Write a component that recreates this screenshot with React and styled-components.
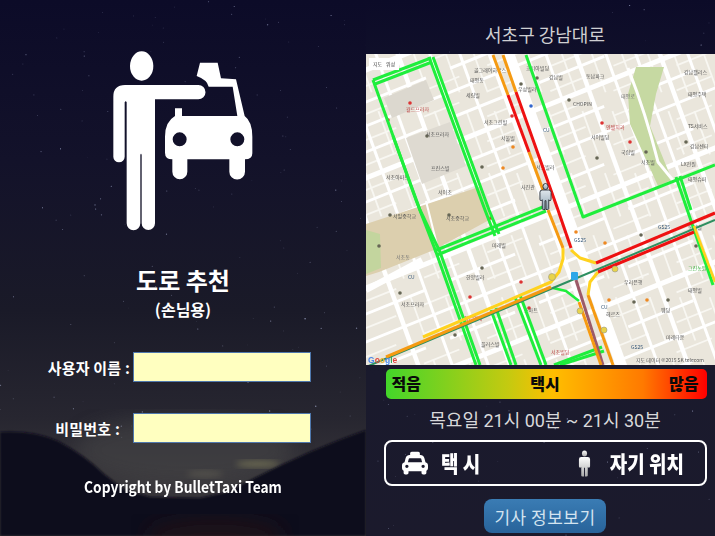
import React from "react";
import styled, { createGlobalStyle } from "styled-components";
import { FaTaxi } from "react-icons/fa";

const KR = `"Noto Sans CJK KR", "Noto Sans", sans-serif`;

// star positions come from a small seeded generator so the sky stays the same
const makeStars = (count, width, height, seed) => {
  let s = seed;
  const next = () => {
    s = (s * 16807) % 2147483647;
    return s / 2147483647;
  };
  return Array.from({ length: count }, () => ({
    x: next() * width,
    y: next() * height,
    r: 0.25 + next() * 0.45,
    o: 0.15 + next() * 0.55,
  }));
};

const Stars = ({ width, height, count, seed }) => (
  <StarSky viewBox={`0 0 ${width} ${height}`} $height={height}>
    {makeStars(count, width, height, seed).map((st, i) => (
      <circle key={i} cx={st.x} cy={st.y} r={st.r} fill="#cfd8ff" opacity={st.o} />
    ))}
  </StarSky>
);

const Hills = () => (
  <HillSvg viewBox="0 0 366 536">
    <defs>
      <filter id="soft"><feGaussianBlur stdDeviation="10" /></filter>
      <filter id="cloud"><feGaussianBlur stdDeviation="3" /></filter>
      <filter id="edge"><feGaussianBlur stdDeviation="0.8" /></filter>
    </defs>
    <ellipse cx="185" cy="450" rx="110" ry="34" fill="#4a4948" opacity="0.5" filter="url(#soft)" />
    <ellipse cx="258" cy="464" rx="22" ry="3.5" fill="#8f8c60" opacity="0.55" filter="url(#cloud)" />
    <ellipse cx="205" cy="474" rx="18" ry="4" fill="#6f6c5c" opacity="0.4" filter="url(#cloud)" />
    <g filter="url(#edge)">
      <path d="M0 432 Q34 430 58 441 Q86 456 104 474 L125 490 L150 497 L200 498 L228 492 Q300 453 366 430 V536 H0 Z" fill="#0f0b1c" />
    </g>
    <ellipse cx="215" cy="536" rx="70" ry="18" fill="#2b1518" opacity="0.55" filter="url(#soft)" />
  </HillSvg>
);

const PassengerLogo = () => (
  <LogoSvg viewBox="0 0 540 600">
    <ellipse cx="155" cy="78" rx="35" ry="44" fill="#fff" />
    <path
      fill="#fff"
      d="M105 135 H325 A21.5 21.5 0 0 1 325 178 H195 V550 A20 20 0 0 1 155 550 V345 Q153 337 151 345 V550 A20 20 0 0 1 110 550 V187 Q107 180 104 187 V350 A17 17 0 0 1 70 350 V170 Q70 135 105 135 Z"
    />
    <path
      fill="#fff"
      fillRule="evenodd"
      d="M330 68 H383 L393 115 L438 118 L464 228 Q487 245 487 290 V340 Q487 358 465 358 V395 A23 23 0 0 1 418 395 V358 H292 V395 A22.5 22.5 0 0 1 247 395 V358 Q225 358 225 338 V290 Q225 245 255 228 V205 H276 V228 H442 L428 140 H356 Q352 120 320 108 Z M290 298 A21 21 0 1 0 248 298 A21 21 0 1 0 290 298 Z M463 298 A21 21 0 1 0 421 298 A21 21 0 1 0 463 298 Z"
    />
  </LogoSvg>
);

const PersonFigure = ({ id, x = 0, y = 0, width = 14, height = 28, from = "#fff", to = "#aaa", edge = "none" }) => (
  <svg x={x} y={y} width={width} height={height} viewBox="0 0 28 56">
    <defs>
      <linearGradient id={id} x1="0" y1="0" x2="0" y2="1">
        <stop offset="0" stopColor={from} />
        <stop offset="1" stopColor={to} />
      </linearGradient>
    </defs>
    <ellipse cx="14" cy="6.5" rx="5.5" ry="6.5" fill={`url(#${id})`} stroke={edge} strokeWidth="2" />
    <path
      fill={`url(#${id})`}
      stroke={edge}
      strokeWidth="2"
      d="M7 14 H21 Q26 14 26 19 V34 Q26 37 23.5 37 Q22 37 21 35 V54 Q21 56 18 56 H15 V37 H13 V56 H10 Q7 56 7 54 V35 Q6 37 4.5 37 Q2 37 2 34 V19 Q2 14 7 14 Z"
    />
  </svg>
);

const avenues = [-62, -28, 8, 30, 62, 92, 122, 141, 178, 208, 238, 268, 292, 320, 350];
const alleys = [-45, -10, 46, 78, 106, 160, 194, 224, 254, 280, 306, 336];
const streets = [18, 50, 74, 100, 126, 150, 176, 208, 236, 262, 290, 320, 350, 380, 410, 440, 470];
const lanes = [34, 62, 88, 113, 138, 163, 192, 222, 249, 276, 305, 335, 365, 395, 425, 455];

const schools = [
  { d: "M0 170 L113 133 L125 165 L68 196 L13 218 L0 222 Z", fill: "#dccfae" },
  { d: "M0 176 L14 180 L15 214 L0 220 Z", fill: "#c3d59e" },
  { d: "M270 13 L298 13 L290 40 L284 72 L306 126 L292 132 L264 70 L262 40 Z", fill: "#c6d9a2" },
  { d: "M18 44 L60 26 L68 46 L26 64 Z", fill: "#dcd8cf" },
  { d: "M40 84 L84 68 L100 112 L56 130 Z", fill: "#dedad1" },
];

const traffic = [
  { c: "#1fee3c", w: 3, p: "7,26 65,4" },
  { c: "#1fee3c", w: 3, p: "9,30 66,8" },
  { c: "#1fee3c", w: 3, p: "63,3 119,156 129,182" },
  { c: "#1fee3c", w: 3, p: "67,3 123,156 133,180" },
  { c: "#1fee3c", w: 3, p: "7,26 50,146 70,198 110,311" },
  { c: "#1fee3c", w: 3, p: "27,82 54,156 74,198 114,311" },
  { c: "#1fee3c", w: 3, p: "68,197 177,153" },
  { c: "#1fee3c", w: 3, p: "71,201 180,157" },
  { c: "#1fee3c", w: 3, p: "125,256 145,311" },
  { c: "#1fee3c", w: 3, p: "130,254 150,311" },
  { c: "#1fee3c", w: 3, p: "149,243 175,311" },
  { c: "#1fee3c", w: 3, p: "154,241 180,311" },
  { c: "#1fee3c", w: 3, p: "188,311 236,293" },
  { c: "#1fee3c", w: 3, p: "194,311 238,297" },
  { c: "#1fee3c", w: 3, p: "160,1 217,163 349,111" },
  { c: "#1fee3c", w: 3, p: "310,123 347,231" },
  { c: "#1fee3c", w: 3, p: "314,122 325,156" },
  { c: "#1fee3c", w: 2.6, p: "187,234 200,237 213,247" },
  { c: "#2e8f60", w: 2, p: "0,313 187,234 349,166" },
  { c: "#9c5a68", w: 3, p: "210,226 237,311" },
  { c: "#f59a12", w: 3, p: "127,1 142,41" },
  { c: "#f59a12", w: 3, p: "137,1 150,38" },
  { c: "#f59a12", w: 3, p: "163,98 177,136" },
  { c: "#f59a12", w: 3, p: "182,156 197,194" },
  { c: "#f59a12", w: 3, p: "20,303 185,233" },
  { c: "#f59a12", w: 3, p: "222,241 247,311" },
  { c: "#f59a12", w: 3, p: "213,248 235,311" },
  { c: "#ffd21e", w: 3, p: "57,283 185,228 193,218 197,205 197,194" },
  { c: "#ffd21e", w: 3, p: "205,196 214,204 230,209" },
  { c: "#ffd21e", w: 3, p: "232,218 224,228 222,241" },
  { c: "#ffd21e", w: 2.6, p: "328,172 349,228" },
  { c: "#ee1111", w: 3, p: "142,41 163,98" },
  { c: "#ee1111", w: 3, p: "150,38 192,156 205,194" },
  { c: "#ee1111", w: 3, p: "230,209 349,159" },
  { c: "#ee1111", w: 3, p: "232,218 328,178" },
];

const places = [
  [108, 18, "골그래이하우스", "#555"], [104, 28, "태평동", "#555"], [100, 43, "세림빌", "#555"],
  [118, 70, "서초그린빌", "#555"], [160, 16, "코리아빌딩", "#555"], [152, 37, "우성빌라", "#555"],
  [183, 25, "강남빌", "#555"], [220, 24, "동남파크", "#555"], [207, 52, "CHOPIN", "#555"],
  [255, 44, "태평로", "#777"], [240, 75, "엔젤치과", "#b44"], [225, 85, "서이빌딩", "#555"],
  [255, 100, "국립빌", "#555"], [275, 110, "서초빌", "#555"], [318, 20, "강남팰리스", "#555"],
  [322, 42, "태평주택", "#555"], [322, 74, "TS서비스", "#555"], [324, 94, "강남센터", "#555"],
  [315, 112, "LX전원", "#555"], [322, 127, "태평슈퍼", "#555"], [60, 82, "서초프라자", "#555"],
  [20, 125, "서초아파트", "#555"], [65, 116, "프린스빌", "#555"], [72, 140, "서이초", "#555"],
  [40, 57, "월드프라자", "#b44"], [27, 164, "서일중학교", "#555"], [80, 166, "서초중학교", "#555"],
  [135, 86, "서울빌", "#555"], [170, 115, "서초빌라", "#555"], [155, 135, "사진관", "#555"],
  [126, 193, "미래빌", "#555"], [100, 225, "한양빌라", "#555"], [30, 205, "서초동", "#777"],
  [35, 252, "서초프라자", "#555"], [98, 266, "청담연세", "#b44"], [158, 258, "스마트", "#555"],
  [115, 292, "플러스빌", "#555"], [185, 300, "서초빌딩", "#b44"], [240, 262, "헤르츠", "#555"],
  [258, 230, "우리은행", "#555"], [295, 258, "웨딩", "#555"], [322, 238, "태평빌", "#555"],
  [300, 285, "미래타운", "#555"], [322, 175, "동서빌", "#555"], [322, 216, "그린농원", "#3a3"],
  [208, 188, "GS25", "#357"], [292, 175, "GS25", "#357"], [265, 295, "GS25", "#357"],
  [42, 225, "CU", "#357"], [235, 255, "CU", "#357"], [177, 78, "CU", "#357"],
];

const pois = [
  [44, 49, "#d33"], [22, 66, "#d33"], [61, 82, "#665"], [171, 24, "#665"], [155, 30, "#665"],
  [236, 69, "#d33"], [203, 46, "#665"], [264, 88, "#d33"], [231, 104, "#665"], [280, 98, "#665"],
  [165, 52, "#36c"], [146, 62, "#d33"], [147, 93, "#e82"], [116, 113, "#665"], [137, 114, "#e82"],
  [125, 164, "#d33"], [24, 161, "#665"], [83, 161, "#665"], [13, 192, "#665"], [116, 214, "#665"],
  [34, 239, "#665"], [104, 243, "#d33"], [89, 281, "#665"], [163, 254, "#d33"], [243, 246, "#e82"],
  [268, 248, "#665"], [302, 246, "#665"], [281, 246, "#e82"], [330, 192, "#665"], [275, 181, "#665"],
  [210, 178, "#e82"], [239, 189, "#e82"], [155, 228, "#d33"], [320, 88, "#665"],
];

const CityMap = () => (
  <MapSvg viewBox="0 0 349 311">
    <rect width="349" height="311" fill="#eae6dc" />
    {alleys.map((x) => (
      <line key={x} x1={x} y1="-5" x2={x + 116} y2="316" stroke="#f8f7f2" strokeWidth="1.8" strokeDasharray="46 20" />
    ))}
    {lanes.map((y) => (
      <line key={y} x1="-5" y1={y} x2="354" y2={y - 144} stroke="#f8f7f2" strokeWidth="1.8" strokeDasharray="38 30" />
    ))}
    {avenues.map((x, i) => (
      <line key={x} x1={x} y1="-5" x2={x + 116} y2="316" stroke="#fff" strokeWidth={x === 141 ? 11 : i % 3 === 0 ? 4.5 : 3} />
    ))}
    {streets.map((y, i) => (
      <line key={y} x1="-5" y1={y} x2="354" y2={y - 144} stroke="#fff" strokeWidth={i % 4 === 0 ? 5 : 3} strokeDasharray={i % 2 ? "70 26" : "none"} />
    ))}
    {schools.map((b, i) => (
      <path key={i} d={b.d} fill={b.fill} />
    ))}
    <line x1="60" y1="147" x2="72" y2="195" stroke="#fff" strokeWidth="2" />
    <path d="M262 14 Q280 60 292 108 L310 130" fill="none" stroke="#fff" strokeWidth="3" />
    <path d="M0 236 L56 206" fill="none" stroke="#fff" strokeWidth="6" />
    {pois.map(([x, y, c], i) => (
      <circle key={i} cx={x} cy={y} r="1.8" fill={c} />
    ))}
    {places.map(([x, y, name, c], i) => (
      <PlaceName key={i} x={x} y={y} fill={c}>{name}</PlaceName>
    ))}
    {traffic.map((t, i) => (
      <polyline key={i} points={t.p} fill="none" stroke={t.c} strokeWidth={t.w} strokeLinejoin="round" />
    ))}
    <circle cx="186" cy="223" r="3.5" fill="#e8d34a" stroke="#998" strokeWidth=".6" />
    <circle cx="249" cy="215" r="3" fill="#e8d34a" stroke="#998" strokeWidth=".6" />
    <circle cx="214" cy="257" r="3" fill="#e8d34a" stroke="#998" strokeWidth=".6" />
    <circle cx="238" cy="276" r="3" fill="#e8d34a" stroke="#998" strokeWidth=".6" />
    <rect x="205" y="218" width="7" height="8" rx="1" fill="#2ea7e8" />
    <rect x="3" y="4" width="30" height="12" fill="#fff" />
    <PlaceName x="7" y="12" fill="#444">지도</PlaceName>
    <PlaceName x="20" y="12" fill="#444">위성</PlaceName>
    <PersonFigure id="pin" x="173" y="129" width="13" height="27" from="#dfe7ec" to="#8ea3b2" edge="#2b3138" />
    <GoogleMark x="2" y="309">
      <tspan fill="#4a87e8">G</tspan><tspan fill="#e0483e">o</tspan><tspan fill="#f2b632">o</tspan>
      <tspan fill="#4a87e8">g</tspan><tspan fill="#3aa757">l</tspan><tspan fill="#e0483e">e</tspan>
    </GoogleMark>
    <PlaceName x="270" y="308" fill="#555">지도 데이터 ©2015 SK telecom</PlaceName>
  </MapSvg>
);

export default function App() {
  return (
    <Screen>
      <GlobalStyle />
      <LoginPanel>
        <Hills />
        <Stars width={366} height={440} count={150} seed={4711} />
        <LoginContent>
          <PassengerLogo />
          <Heading>도로 추천</Heading>
          <SubHeading>(손님용)</SubHeading>
          <LoginForm>
            <FieldLabel $right={0}>사용자 이름 :</FieldLabel>
            <FieldInput type="text" aria-label="사용자 이름" />
            <FieldLabel $right={10}>비밀번호 :</FieldLabel>
            <FieldInput type="password" aria-label="비밀번호" />
          </LoginForm>
          <Copyright>Copyright by BulletTaxi Team</Copyright>
        </LoginContent>
      </LoginPanel>
      <MapPanel>
        <Stars width={349} height={536} count={110} seed={90210} />
        <MapContent>
          <RoadTitle>서초구 강남대로</RoadTitle>
          <CityMap />
          <Controls>
            <DensityBar>
              <span>적음</span>
              <span>택시</span>
              <span>많음</span>
            </DensityBar>
            <TimeRange>목요일 21시 00분 ~ 21시 30분</TimeRange>
            <Legend>
              <LegendItem>
                <FaTaxi size={26} color="#fff" />
                <LegendText>택 시</LegendText>
              </LegendItem>
              <LegendItem $gap={19}>
                <svg width="13" height="27">
                  <PersonFigure id="legendPerson" width={13} height={27} />
                </svg>
                <LegendText>자기 위치</LegendText>
              </LegendItem>
            </Legend>
            <DriverButton>기사 정보보기</DriverButton>
          </Controls>
        </MapContent>
      </MapPanel>
    </Screen>
  );
}

const GlobalStyle = createGlobalStyle`
  html, body {
    margin: 0;
    padding: 0;
    background: #12121f;
  }
  body {
    font-family: ${KR};
  }
`;

const Screen = styled.div`
  display: flex;
  width: 715px;
  height: 536px;
  overflow: hidden;
`;

const LoginPanel = styled.section`
  position: relative;
  width: 366px;
  height: 536px;
  background: linear-gradient(180deg, #0c0b28 0%, #13122a 30%, #1a1a28 58%, #272630 78%, #37353a 90%);
`;

const MapPanel = styled.section`
  position: relative;
  width: 349px;
  height: 536px;
  background: linear-gradient(180deg, #0c0b28 0%, #10102a 12%, #1a1a2d 70%, #1b1a2c 100%);
`;

const StarSky = styled.svg`
  position: absolute;
  inset: 0;
  width: 100%;
  height: ${({ $height }) => $height}px;
`;

const HillSvg = styled.svg`
  position: absolute;
  inset: 0;
  width: 100%;
  height: 100%;
`;

const LoginContent = styled.div`
  position: relative;
  display: flex;
  flex-direction: column;
  align-items: center;
  height: 100%;
  padding-top: 40px;
  box-sizing: border-box;
  color: #fff;
`;

const LogoSvg = styled.svg`
  display: block;
  width: 180px;
  height: 200px;
  margin-right: 7px;
`;

const Heading = styled.h1`
  margin: 26px 0 0;
  font-size: 24px;
  line-height: 28px;
  font-weight: 700;
`;

const SubHeading = styled.h2`
  margin: 3px 0 0;
  font-size: 16px;
  line-height: 24px;
  font-weight: 700;
`;

const LoginForm = styled.form`
  display: grid;
  grid-template-columns: 133px 178px;
  grid-auto-rows: 30px;
  row-gap: 31px;
  align-items: center;
  width: 311px;
  margin: 31px 0 0 -55px;
`;

const FieldLabel = styled.label`
  justify-self: end;
  margin-right: ${({ $right }) => $right + 3}px;
  font-size: 15px;
  font-weight: 700;
  letter-spacing: 0.2px;
  white-space: nowrap;
`;

const FieldInput = styled.input`
  box-sizing: border-box;
  width: 178px;
  height: 30px;
  padding: 0 4px;
  border: 1px solid #4f78ad;
  border-radius: 0;
  background: #ffffc0;
  outline: none;
`;

const Copyright = styled.p`
  margin: 32px 0 0;
  font-size: 16px;
  line-height: 22px;
  font-weight: 700;
  white-space: nowrap;
  transform: scaleX(0.86);
`;

const MapContent = styled.div`
  position: relative;
  display: flex;
  flex-direction: column;
  align-items: center;
  height: 100%;
`;

const RoadTitle = styled.h2`
  flex: none;
  margin: 0 0 0 9px;
  height: 54px;
  line-height: 68px;
  font-size: 18px;
  font-weight: 400;
  color: #cfcfd2;
`;

const MapSvg = styled.svg`
  display: block;
  flex: none;
  width: 349px;
  height: 311px;
  filter: blur(0.55px);
`;

const PlaceName = styled.text`
  font-family: ${KR};
  font-size: 5px;
`;

const GoogleMark = styled.text`
  font-family: "Liberation Sans", sans-serif;
  font-size: 8.5px;
  font-weight: 700;
`;

const Controls = styled.div`
  box-sizing: border-box;
  display: flex;
  flex-direction: column;
  align-items: center;
  width: 100%;
  padding-left: 9px;
`;

const DensityBar = styled.div`
  box-sizing: border-box;
  display: flex;
  justify-content: space-between;
  align-items: center;
  flex: none;
  width: 321px;
  height: 30px;
  margin: 4px 0 0 2px;
  padding: 0 8px 2px 6px;
  border-radius: 5px;
  background: linear-gradient(90deg, #43d62a 0%, #c4ca10 38%, #ffbe00 52%, #ff7a00 80%, #ff0000 100%);
  color: #0a0a0a;
  font-size: 16px;
  font-weight: 900;
`;

const TimeRange = styled.div`
  margin-top: 9px;
  font-family: Roboto, ${KR};
  font-size: 18px;
  line-height: 26px;
  color: #d8d8da;
  white-space: nowrap;
`;

const Legend = styled.div`
  box-sizing: border-box;
  display: flex;
  justify-content: space-between;
  align-items: center;
  flex: none;
  width: 323px;
  height: 46px;
  margin: 6px 0 0 1px;
  padding: 0 21px 0 16px;
  border: 2px solid #fff;
  border-radius: 8px;
`;

const LegendItem = styled.div`
  display: flex;
  align-items: center;
  gap: ${({ $gap }) => $gap || 13}px;
  svg {
    display: block;
  }
`;

const LegendText = styled.span`
  display: inline-block;
  font-size: 19px;
  line-height: 26px;
  font-weight: 900;
  color: #fff;
  transform: scaleY(1.15);
`;

const DriverButton = styled.button`
  box-sizing: border-box;
  width: 122px;
  height: 34px;
  margin-top: 13px;
  padding: 0;
  border: 0;
  border-radius: 8px;
  background: linear-gradient(180deg, #3a7cb4 0%, #28639a 100%);
  color: #d4e4f0;
  font-family: ${KR};
  font-size: 17px;
  letter-spacing: 0.5px;
`;
